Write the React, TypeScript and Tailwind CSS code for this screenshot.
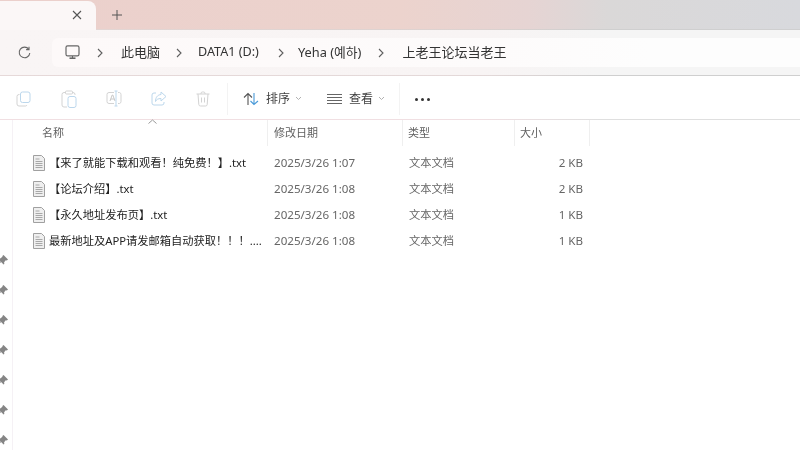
import React from "react";

const FONT = "font-['Noto_Sans','Noto_Sans_CJK_SC',sans-serif]";

function Chevron() {
  return (
    <svg width="8" height="10" viewBox="0 0 8 10" fill="none" stroke="#5f5f5f" strokeWidth="1.1">
      <path d="M2 1l4 4-4 4" />
    </svg>
  );
}

function Caret() {
  return (
    <svg width="7" height="5" viewBox="0 0 7 5" fill="none" stroke="#a8a8a8" strokeWidth="0.9">
      <path d="M1 1l2.5 2.5L6 1" />
    </svg>
  );
}

function Copy() {
  return (
    <svg width="16" height="16" viewBox="0 0 16 16" fill="none" strokeWidth="1">
      <path d="M3.5 3.5h-.5a2 2 0 0 0-2 2V13a2 2 0 0 0 2 2h6.500a2 2 0 0 0 1.500-1" stroke="#d3d3d3" />
      <rect x="4.500" y="1" width="9.500" height="10.500" rx="2" stroke="#bcd7ec" />
    </svg>
  );
}

function Paste() {
  return (
    <svg width="16" height="18" viewBox="0 0 16 18" fill="none" strokeWidth="1">
      <path d="M5 2.500H3a2 2 0 0 0-2 2V15a2 2 0 0 0 2 2h3M11 2.500h1a2 2 0 0 1 2 2V5" stroke="#d3d3d3" />
      <rect x="4.500" y="1" width="7" height="3" rx="1" stroke="#d3d3d3" />
      <rect x="7" y="6.500" width="8" height="11" rx="2" stroke="#bcd7ec" />
    </svg>
  );
}

function Rename() {
  return (
    <svg width="16" height="17" viewBox="0 0 16 17" fill="none" strokeWidth="1">
      <path d="M8 2.500H3a2 2 0 0 0-2 2v7a2 2 0 0 0 2 2h5M12 2.500h1.500a2 2 0 0 1 1.500 2v7a2 2 0 0 1-1.500 2H12" stroke="#d3d3d3" />
      <path d="M4 11l2.200-6h.6L9 11M4.800 9h3.400" stroke="#c8c8c8" />
      <path d="M8.500 1h3M10 1v15M8.500 16h3" stroke="#bcd7ec" />
    </svg>
  );
}

function Share() {
  return (
    <svg width="16" height="15" viewBox="0 0 16 15" fill="none" strokeWidth="1">
      <path d="M5 2H3a2 2 0 0 0-2 2v8a2 2 0 0 0 2 2h8a2 2 0 0 0 2-2v-1" stroke="#bcd7ec" />
      <path d="M10 1l5 4.500-5 4.500V7.500C7 7.500 5.500 8.500 4.500 10.500 4.500 6.500 6.500 3.800 10 3.500z" stroke="#bcd7ec" />
    </svg>
  );
}

function Trash() {
  return (
    <svg width="14" height="16" viewBox="0 0 14 16" fill="none" stroke="#d3d3d3" strokeWidth="1">
      <path d="M0.500 3h13M5 3V2a1.500 1.500 0 0 1 1.500-1h1A1.500 1.500 0 0 1 9 2v1" />
      <path d="M2 3l.8 10.500A1.700 1.700 0 0 0 4.500 15h5a1.700 1.700 0 0 0 1.700-1.500L12 3" />
      <path d="M5.500 6.500v5M8.500 6.500v5" />
    </svg>
  );
}

function SortIcon() {
  return (
    <svg width="16" height="14" viewBox="0 0 16 14" fill="none" strokeWidth="1.100">
      <path d="M5 13V1.500M1 5.500l4-4 4 4" stroke="#555" />
      <path d="M11 1v11.500M7.500 9l3.500 3.500L15 9" stroke="#4a9ad8" />
    </svg>
  );
}

function ViewIcon() {
  return (
    <svg width="15" height="10" viewBox="0 0 15 10" fill="none" stroke="#666" strokeWidth="1">
      <path d="M0 .500h15M0 3.500h15M0 6.500h15M0 9.500h15" />
    </svg>
  );
}

function Pc() {
  return (
    <svg width="15" height="15" viewBox="0 0 15 15" fill="none">
      <rect x="1" y="0.800" width="13" height="10" rx="1.600" stroke="#666" strokeWidth="1.200" />
      <path d="M4.500 13.200h6" stroke="#666" strokeWidth="1.600" />
      <path d="M7.500 11v2" stroke="#666" strokeWidth="1" />
    </svg>
  );
}

function Refresh() {
  return (
    <svg width="13" height="13" viewBox="0 0 13 13" fill="none" stroke="#666" strokeWidth="1.100">
      <path d="M10.800 3.300A5.300 5.300 0 1 0 11.800 7" />
      <path d="M11 .700v2.900H8.100" />
    </svg>
  );
}

function Doc() {
  return (
    <svg width="14" height="16" viewBox="0 0 14 16" fill="#efefef" stroke="#a0a0a0" strokeWidth="1">
      <path d="M1.500 .500h8l3 3v12h-11z" />
      <path d="M3.500 4h4M3.500 6.500h7M3.500 8.500h7M3.500 10.500h7M3.500 12.500h7" stroke="#a8a8a8" />
    </svg>
  );
}

function Pin() {
  return (
    <svg width="10" height="10" viewBox="0 0 9 9" fill="#858585">
      <path d="M5 0l4 4-1 1-1-.300L5.500 6.500 5.700 8 5 8.500 2.800 6.200 0.500 8.500 0 8l2.300-2.300L0 3.500.700 3l1.300.200L4 1.500 3.900.900z" />
    </svg>
  );
}

const rows = [
  ["【来了就能下载和观看！纯免费！】.txt", "2025/3/26 1:07", "2 KB"],
  ["【论坛介绍】.txt", "2025/3/26 1:08", "2 KB"],
  ["【永久地址发布页】.txt", "2025/3/26 1:08", "1 KB"],
  ["最新地址及APP请发邮箱自动获取！！！....", "2025/3/26 1:08", "1 KB"],
];

export default function App() {
  return (
    <div className={`w-[800px] h-[450px] overflow-hidden bg-white flex flex-col ${FONT} blur-[0.3px]`}>
      {/* Tab strip */}
      <div className="h-[29px] shrink-0 flex items-end bg-[linear-gradient(90deg,#ebd0cc_0%,#ecd3cd_50%,#e6d4d3_66%,#dad8d8_76%,#d8d9dd_100%)]">
        <div className="w-[96px] h-[28px] bg-[#fbf7f7] rounded-tr-lg flex items-center justify-end pr-[14px] pb-[1px]">
          <svg width="10" height="10" viewBox="0 0 10 10" stroke="#555" strokeWidth="1.100"><path d="M1 1l8 8M9 1l-8 8" /></svg>
        </div>
        <div className="w-[42px] h-[28px] flex items-center justify-center">
          <svg width="10" height="10" viewBox="0 0 10 10" stroke="#555" strokeWidth="1"><path d="M5 0v10M0 5h10" /></svg>
        </div>
      </div>
      <div className="h-[1px] shrink-0 bg-[linear-gradient(90deg,#fbf7f7_0%,#fbf7f7_12%,#e3d6d4_12%,#dcd2d0_60%,#cfcfcf_75%,#cfcfd0_100%)]" />

      {/* Address band */}
      <div className="h-[45px] shrink-0 flex items-center bg-[linear-gradient(90deg,#f9f5f5,#f8f4f4_60%,#f5f5f5_75%)]">
        <div className="w-[52px] shrink-0 flex justify-start pl-[18px]"><Refresh /></div>
        <div className="flex-1 h-[29px] bg-[linear-gradient(90deg,#fdf9f9,#fdfbfb_60%,#fdfdfd_80%)] rounded-l-md flex items-center text-[13px] text-[#333]">
          <div className="ml-[13px] mr-[16px] flex"><Pc /></div>
          <Chevron />
          <span className="ml-[17px] mr-[15px]">此电脑</span>
          <Chevron />
          <span className="ml-[15px] mr-[18px] text-[12.6px]">DATA1 (D:)</span>
          <Chevron />
          <span className="ml-[13px] mr-[16px] text-[12.8px] font-['Noto_Sans','Noto_Sans_CJK_KR',sans-serif]">Yeha (예하)</span>
          <Chevron />
          <span className="ml-[17px]">上老王论坛当老王</span>
        </div>
      </div>
      <div className="h-[1px] shrink-0 bg-[linear-gradient(90deg,#e6d9d9,#e3d8d8_60%,#cfcfcf_75%)]" />

      {/* Command bar */}
      <div className="h-[43px] shrink-0 flex items-center bg-white pt-[2px]">
        <div className="w-[228px] shrink-0 flex items-center pl-[16px] gap-[29px] border-r border-[#f3f3f3] h-[32px]">
          <Copy />
          <Paste />
          <Rename />
          <Share />
          <Trash />
        </div>
        <div className="flex items-center ml-[15px] text-[12px] text-[#3f3f3f]">
          <SortIcon />
          <span className="ml-[7px] mr-[5px]">排序</span>
          <Caret />
        </div>
        <div className="flex items-center ml-[25px] text-[12px] text-[#3f3f3f] pr-[14px] border-r border-[#f3f3f3] h-[32px]">
          <ViewIcon />
          <span className="ml-[7px] mr-[5px]">查看</span>
          <Caret />
        </div>
        <div className="ml-[15px] flex gap-[3px] pt-[1px]">
          <span className="w-[3px] h-[3px] rounded-full bg-[#333]" />
          <span className="w-[3px] h-[3px] rounded-full bg-[#333]" />
          <span className="w-[3px] h-[3px] rounded-full bg-[#333]" />
        </div>
      </div>
      <div className="h-[1px] shrink-0 bg-[linear-gradient(90deg,#f1dfe2,#f0dfe2_60%,#dfdfdf_75%)]" />

      {/* Body */}
      <div className="flex-1 flex min-h-0">
        {/* Collapsed navigation pane with pins */}
        <div className="w-[13px] shrink-0 border-r border-[#f5f1f5] flex flex-col items-start gap-[20px] pt-[135px]">
          {Array.from({ length: 7 }).map((_, i) => (
            <div key={i} className="-ml-[2px] flex"><Pin /></div>
          ))}
        </div>

        <div className="flex-1 min-w-0">
          {/* Header */}
          <div className="relative h-[26px] flex text-[11px] text-[#5f5f5f]">
            <div className="w-[255px] h-[26px] pl-[29px] flex items-center border-r border-[#efefef]">名称</div>
            <div className="w-[135px] h-[26px] pl-[6px] flex items-center border-r border-[#efefef]">修改日期</div>
            <div className="w-[112px] h-[26px] pl-[5px] flex items-center border-r border-[#efefef]">类型</div>
            <div className="w-[75px] h-[26px] pl-[5px] flex items-center border-r border-[#efefef]">大小</div>
            <svg className="absolute left-[135px] top-[-1px]" width="9" height="5" viewBox="0 0 9 5" fill="none" stroke="#9a9a9a" strokeWidth="1">
              <path d="M.5 4.500l4-3.500 4 3.500" />
            </svg>
          </div>

          {/* Rows */}
          <div className="pt-[4px]">
            {rows.map(([name, date, size]) => (
              <div key={name} className="h-[26px] flex items-center text-[11.25px]">
                <div className="w-[255px] shrink-0 flex items-center pl-[19px]">
                  <Doc />
                  <span className="ml-[3px] whitespace-nowrap text-[#222]">{name}</span>
                </div>
                <div className="w-[135px] shrink-0 pl-[6px] text-[#666] text-[11.6px]">{date}</div>
                <div className="w-[112px] shrink-0 pl-[6px] text-[#666]">文本文档</div>
                <div className="w-[68px] shrink-0 text-right text-[#666] text-[11.6px]">{size}</div>
              </div>
            ))}
          </div>
        </div>
      </div>
    </div>
  );
}
